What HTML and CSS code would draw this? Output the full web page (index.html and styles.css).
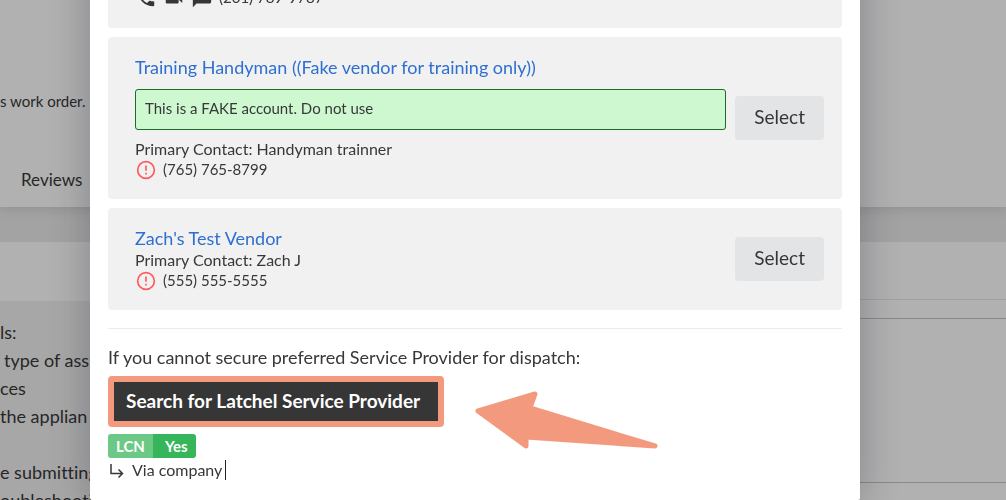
FILE: index.html
```html
<!DOCTYPE html>
<html lang="en">
<head>
<meta charset="utf-8">
<title>Work order - assign vendor</title>
<link rel="stylesheet" href="styles.css">
</head>
<body>
<main class="page">
  <section class="summary">
    <p class="summary-note">s work order.</p>
    <a class="tab" href="#reviews">Reviews</a>
  </section>
  <section class="details">
    <div class="details-left">
      <div class="details-head"></div>
      <div class="details-text">
        <p>ls:</p>
        <p class="indent">type of ass</p>
        <p>ces</p>
        <p>the applian</p>
        <p>&nbsp;</p>
        <p>e submitting</p>
        <p>oubleshooti</p>
      </div>
    </div>
    <div class="details-right">
      <div class="details-rule"></div>
      <div class="details-box"></div>
    </div>
  </section>
</main>

<div class="backdrop">
  <div class="dialog" role="dialog" aria-label="Select a vendor">
    <article class="card">
      <div class="card-info">
        <div class="contact-row">
          <svg class="contact-icon" viewBox="0 0 24 24"><path d="M6.6 10.8c1.4 2.8 3.8 5.100 6.600 6.600l2.200-2.200c.3-.3.700-.4 1-.2 1.100.4 2.300.6 3.600.6.600 0 1 .4 1 1V20c0 .600-.4 1-1 1C10.600 21 3 13.400 3 4c0-.600.4-1 1-1h3.500c.600 0 1 .4 1 1 0 1.300.2 2.500.6 3.600.1.400 0 .700-.2 1z"/></svg>
          <svg class="contact-icon" viewBox="0 0 24 24"><path d="M17 10.500V7c0-.600-.4-1-1-1H4c-.600 0-1 .4-1 1v10c0 .600.4 1 1 1h12c.600 0 1-.4 1-1v-3.500l4 4v-11z"/></svg>
          <svg class="contact-icon" viewBox="0 0 24 24"><path d="M20 2H4c-1.100 0-2 .9-2 2v18l4-4h14c1.100 0 2-.9 2-2V4c0-1.100-.9-2-2-2z"/></svg>
          <span class="contact-number">(201) 789-9787</span>
        </div>
      </div>
    </article>

    <article class="card">
      <div class="card-info">
        <a class="vendor" href="#training">Training Handyman ((Fake vendor for training only))</a>
        <p class="notice">This is a FAKE account. Do not use</p>
        <p class="contact">Primary Contact: Handyman trainner</p>
        <div class="phone-row">
          <svg class="warn-icon" viewBox="0 0 24 24"><circle cx="12" cy="12" r="10"/><path d="M12 6.500v6.500M12 15.200v2.300"/></svg>
          <span>(765) 765-8799</span>
        </div>
      </div>
      <button class="select" type="button">Select</button>
    </article>

    <article class="card">
      <div class="card-info">
        <a class="vendor" href="#zach">Zach's Test Vendor</a>
        <p class="contact">Primary Contact: Zach J</p>
        <div class="phone-row">
          <svg class="warn-icon" viewBox="0 0 24 24"><circle cx="12" cy="12" r="10"/><path d="M12 6.500v6.500M12 15.200v2.300"/></svg>
          <span>(555) 555-5555</span>
        </div>
      </div>
      <button class="select" type="button">Select</button>
    </article>

    <footer class="fallback">
      <p class="fallback-text">If you cannot secure preferred Service Provider for dispatch:</p>
      <div class="search-row">
        <button class="search" type="button">Search for Latchel Service Provider</button>
        <svg class="pointer" viewBox="0 0 184 60"><path d="M3 21 60 4 55 18 180 56 51 47 51 56z"/></svg>
      </div>
      <div class="badge"><span class="badge-name">LCN</span><span class="badge-value">Yes</span></div>
      <div class="via">
        <svg class="via-icon" viewBox="0 0 16 16"><path d="M3 2v9.500H14.500M10.500 7.500l4 4-4 4"/></svg>
        <span class="via-text">Via company</span>
      </div>
    </footer>
  </div>
</div>
</body>
</html>
```
FILE: styles.css
```css
* { box-sizing: border-box; }

body {
  margin: 0;
  overflow: hidden;
  background: #eaeaea;
  color: #383838;
  font-family: Lato, "Open Sans", sans-serif;
  font-size: 18px;
  font-variant-ligatures: none;
  line-height: 24px;
}

p { margin: 0; }
a { text-decoration: none; }
button { border: 0; font: inherit; cursor: pointer; }

.page {
  display: flex;
  flex-direction: column;
  gap: 35px;
  min-height: 100vh;
}

.summary {
  display: flex;
  flex-direction: column;
  gap: 55px;
  padding: 90px 0 15px;
  background: #fefefe;
  box-shadow: 0 2px 12px rgba(0, 0, 0, 0.12);
}
.summary-note { font-size: 15px; line-height: 23px; }
.tab { padding-left: 21px; color: inherit; font-size: 17px; }

.details {
  flex: 1;
  display: grid;
  grid-template-columns: 1fr 1fr;
  background: #fefefe;
}
.details-left { display: flex; flex-direction: column; }
.details-head { height: 59px; }
.details-text {
  flex: 1;
  padding-top: 17px;
  background: #f0f0f0;
  line-height: 28px;
}
.indent { padding-left: 4px; }
.details-right { padding-top: 57px; }
.details-rule { border-top: 1px solid #e6e6e6; }
.details-box {
  height: 165px;
  margin-top: 18px;
  border: solid #c4c4c4;
  border-width: 1px 0 1px 1px;
}

.backdrop {
  position: fixed;
  inset: 0;
  display: flex;
  align-items: flex-end;
  justify-content: center;
  padding: 0 146px 0 90px;
  background: rgba(0, 0, 0, 0.3);
}

.dialog {
  flex: 1;
  display: flex;
  flex-direction: column;
  gap: 9px;
  padding: 18px 18px 20px;
  border-radius: 2px;
  background: #fff;
  box-shadow: 0 4px 44px rgba(20, 22, 40, 0.3);
}

.card {
  display: flex;
  align-items: center;
  gap: 9px;
  padding: 19px 18px 19px 27px;
  border-radius: 4px;
  background: #f1f1f1;
  font-size: 15px;
  line-height: 20px;
}
.card-info { flex: 1; }

.contact-row { display: flex; align-items: center; gap: 6px; line-height: 22px; }
.contact-icon { width: 22px; height: 22px; fill: #363636; }
.contact-number { padding-bottom: 2px; line-height: 20px; }

.vendor {
  display: block;
  padding-bottom: 2px;
  color: #2f6fd0;
  font-size: 18px;
  line-height: 22px;
}
.notice {
  margin: 9px 0 10px;
  padding: 8px 9px 11px;
  border: 1px solid #1c6b2a;
  border-radius: 3px;
  background: #cef8d0;
}
.contact { padding-bottom: 2px; font-size: 16px; line-height: 18px; }

.phone-row {
  display: flex;
  align-items: center;
  gap: 6px;
  height: 20px;
  line-height: 18px;
}
.phone-row span { padding-bottom: 2px; }
.warn-icon {
  width: 22px;
  height: 20px;
  fill: none;
  stroke: #ff5a5f;
  stroke-width: 2;
}

.select {
  padding: 9px 19px 11px;
  border-radius: 4px;
  background: #e3e4e6;
  color: #363636;
  font-size: 19px;
  line-height: 24px;
}

.fallback {
  margin-top: 9px;
  padding-top: 17px;
  border-top: 1px solid #ebebeb;
}
.fallback-text { padding-bottom: 2px; line-height: 22px; }
.search-row { position: relative; margin-top: 6px; }
.search {
  display: block;
  padding: 7px 18px 8px 12px;
  border: 6px solid #f39a7e;
  border-radius: 4px;
  background: #363636;
  color: #fff;
  font-size: 19px;
  font-weight: 700;
  line-height: 24px;
}
.pointer {
  position: absolute;
  left: 367px;
  top: 14px;
  width: 184px;
  height: 60px;
  fill: #f39a7e;
  stroke: #f39a7e;
  stroke-width: 5;
  stroke-linejoin: round;
}

.badge {
  display: inline-flex;
  margin-top: 7px;
  border-radius: 3px;
  overflow: hidden;
  color: #fff;
  font-size: 15px;
  font-weight: 700;
  vertical-align: top;
}
.badge-name { padding: 0 8px; background: #6bc985; }
.badge-value { padding: 0 8px 0 12px; background: #37b55a; }

.via { display: flex; align-items: center; gap: 8px; margin-top: 2px; line-height: 20px; font-size: 16px; }
.via-icon {
  width: 16px;
  height: 16px;
  fill: none;
  stroke: #363636;
  stroke-width: 1.5;
}
.via-text { padding-right: 3px; border-right: 1px solid #222; }
```
